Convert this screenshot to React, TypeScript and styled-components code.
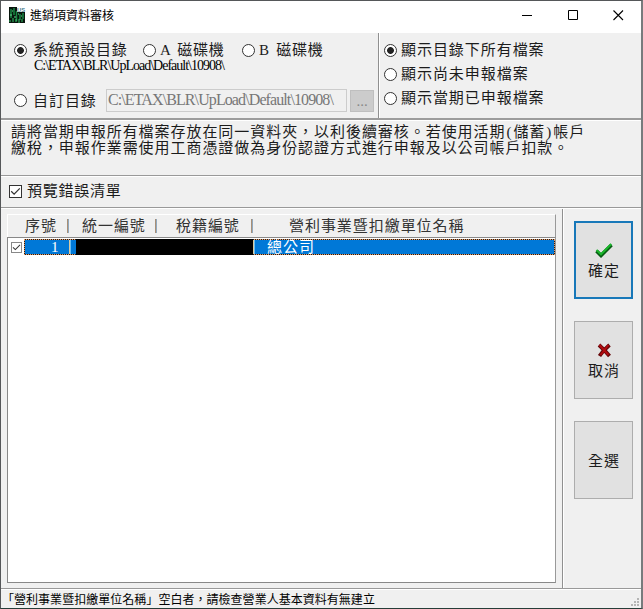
import React from 'react';
import styled, { createGlobalStyle, css } from 'styled-components';

const GlobalStyle = createGlobalStyle`
  * { box-sizing: border-box; }
  body { margin: 0; background: #f0f0f0; overflow: hidden; }
  button, input { font: inherit; color: inherit; }
`;

const Window = styled.div`
  width: 643px;
  height: 609px;
  display: flex;
  flex-direction: column;
  background: #f0f0f0;
  border: 1px solid #555759;
  border-right: 2px solid #777b7d;
  border-bottom-color: #263d38;
  color: #1c1c1c;
  font: 15px/16px "Liberation Serif", "Noto Sans CJK TC", serif;
  letter-spacing: 0.95px;
  white-space: pre;
`;

const TitleBar = styled.header`
  height: 32px;
  flex: none;
  display: flex;
  align-items: center;
  background: #fff;
  padding: 0 0 3px 8px;
`;

const Title = styled.h1`
  flex: 1;
  margin: 0 0 1px 4px;
  font: 12px/16px "Noto Sans CJK TC", sans-serif;
  letter-spacing: 0;
  color: #000;
`;

const CaptionButton = styled.button`
  width: 46px;
  height: 29px;
  padding: 0;
  border: 0;
  background: none;
  display: grid;
  place-items: center;
  &:last-child { width: 45px; }
`;

const Source = styled.section`
  height: 87px;
  flex: none;
  display: flex;
  border-bottom: 2px solid #9c9c9c;
`;

const Folders = styled.div`
  width: 378px;
  padding: 9px 0 0 13px;
  border-right: 1px solid #909090;
`;

const Filters = styled.div`
  flex: 1;
  border-left: 1px solid #fff;
  padding: 8px 0 0 4px;
  display: flex;
  flex-direction: column;
`;

const Choices = styled.div`
  display: flex;
  height: 16px;
  letter-spacing: 0.75px;
  word-spacing: 2px;
`;

const Choice = styled.label<{ $width?: number; $tall?: boolean; $gap?: number }>`
  display: flex;
  align-items: center;
  gap: ${p => p.$gap ?? 4}px;
  width: ${p => (p.$width ? `${p.$width}px` : 'auto')};
  height: ${p => (p.$tall ? 24 : 16)}px;
  flex: none;
  ${p => p.$tall && css`padding-bottom: 6px;`}
`;

const Dot = styled.input.attrs({ type: 'radio' })`
  appearance: none;
  flex: none;
  width: 13px;
  height: 13px;
  margin: 0;
  border: 1px solid #333;
  border-radius: 50%;
  background: #fff;
  &:checked { background: radial-gradient(circle, #222 0 3px, #fff 3.8px); }
`;

const Path = styled.div`
  height: 16px;
  margin: 0 0 0 20px;
  color: #000;
  font-size: 14px;
  line-height: 16px;
  letter-spacing: -1px;
`;

const CustomRow = styled.div`
  display: flex;
  margin-top: 15px;
  height: 23px;
  align-items: center;
`;

const PathField = styled.input`
  width: 241px;
  height: 23px;
  border: 1px solid #ccc;
  background: #f0f0f0;
  padding: 0 1px 1px;
  color: #777;
  font-size: 16px;
  letter-spacing: -0.9px;
`;

const Browse = styled.button`
  width: 24px;
  height: 22px;
  margin-left: 3px;
  padding: 0;
  border: 1px solid #bfbfbf;
  background: #ccc;
  color: #888;
`;

const Notice = styled.section`
  height: 56px;
  flex: none;
  padding: 3px 0 0 10px;
  border-top: 1px solid #fff;
  border-bottom: 1px solid #999;
`;

const Paren = styled.span`
  padding: 0 1px;
`;

const Preview = styled.section`
  height: 32px;
  flex: none;
  display: flex;
  padding: 6px 0 0 8px;
  border-top: 1px solid #fff;
  border-bottom: 1px solid #999;
  letter-spacing: 0.75px;
`;

const Box = styled.span<{ $light?: boolean }>`
  width: ${p => (p.$light ? 11 : 13)}px;
  height: ${p => (p.$light ? 11 : 13)}px;
  flex: none;
  display: grid;
  place-items: center;
  background: #fff;
  border: 1px solid ${p => (p.$light ? '#888' : '#333')};
`;

const Main = styled.main`
  flex: 1;
  display: flex;
  min-height: 0;
  border-top: 1px solid #fff;
  border-bottom: 1px solid #999;
`;

const ListPane = styled.div`
  width: 562px;
  padding: 5px 6px 5px;
  border-right: 1px solid #909090;
  display: flex;
  flex-direction: column;
`;

const ListHeader = styled.div`
  height: 23px;
  flex: none;
  display: flex;
  align-items: center;
  border: 1px solid #fff;
  border-right-color: #999;
  border-bottom: 0;
  color: #333;
`;

const Column = styled.span<{ $width: number; $indent: number }>`
  width: ${p => p.$width}px;
  padding-left: ${p => p.$indent}px;
  flex: none;
`;

const Divider = styled.span<{ $selected?: boolean }>`
  width: 2px;
  height: 14px;
  flex: none;
  border-left: 1px solid ${p => (p.$selected ? '#d8c9a0' : '#a98f76')};
  border-right: 1px solid ${p => (p.$selected ? '#66bdf5' : '#91a9bf')};
`;

const List = styled.div`
  flex: 1;
  background: #fff;
  border: 1px solid #888;
  border-right-color: #999;
  padding-top: 1px;
`;

const Row = styled.div`
  display: flex;
  align-items: center;
  height: 16px;
  padding-left: 3px;
`;

const Selected = styled.div`
  flex: 1;
  margin-left: 2px;
  height: 16px;
  display: flex;
  align-items: center;
  background: linear-gradient(#0078d7, #0078d7) padding-box, #1c1c20 border-box;
  border: 1px dotted #e59a62;
  color: #fff;
`;

const Redaction = styled.span`
  width: 177px;
  height: 16px;
  flex: none;
  background: #000;
`;

const Actions = styled.aside`
  flex: 1;
  padding: 12px 0 0 10px;
  border-left: 1px solid #fff;
  display: flex;
  flex-direction: column;
  gap: 22px;
`;

const Action = styled.button<{ $primary?: boolean }>`
  width: 59px;
  height: 78px;
  flex: none;
  display: flex;
  flex-direction: column;
  align-items: center;
  justify-content: center;
  gap: 5px;
  padding: 1px 0 0 1px;
  background: #e1e1e1;
  border: ${p => (p.$primary ? '2px solid #1878b9' : '1px solid #adadad')};
  letter-spacing: 0.95px;
  line-height: 16px;
`;

const StatusBar = styled.footer`
  height: 19px;
  flex: none;
  display: flex;
  justify-content: space-between;
  padding-left: 1px;
  border-top: 1px solid #fff;
  font: 12px/18px "Noto Sans CJK TC", sans-serif;
  letter-spacing: 0.03px;
  color: #000;
`;

const Grip = styled.svg`
  align-self: flex-end;
  margin: 0 1px 1px 0;
`;

function Tick({ size }: { size: number }) {
  return (
    <svg width={size} height={size} viewBox="0 0 11 11" fill="none" stroke="#333" strokeWidth="1.25">
      <path d="M1.2 5.3 4.1 8.1 9.8 2.4" />
    </svg>
  );
}

function AppIcon() {
  return (
    <svg width="17" height="17" viewBox="0 0 17 17">
      <path d="M0 0H8V5H16V16H0Z" fill="#08150d" />
      <path d="M2 2V11M5 1V8M7.5 4V14M11 7V13M14 6V12" stroke="#168641" strokeWidth="1.5" />
      <path d="M1 13V15M4 11V15M7 12V15M10 12V16M13 12V15" stroke="#34c56b" />
      <path d="M3 4H4M1 8H3M9 7H10M5 10H7M12 9H13" stroke="#65d58d" />
      <text x="8" y="5" fontFamily="Liberation Sans" fontSize="5.8" fontWeight="bold" letterSpacing="0" fill="#477e91">US</text>
    </svg>
  );
}

const filters = ['顯示目錄下所有檔案', '顯示尚未申報檔案', '顯示當期已申報檔案'];

export default function App() {
  return (
    <>
      <GlobalStyle />
      <Window>
        <TitleBar>
          <AppIcon />
          <Title>進銷項資料審核</Title>
          <CaptionButton aria-label="Minimize"><svg width="11" height="11"><path d="M0 5.5H10" stroke="#000" /></svg></CaptionButton>
          <CaptionButton aria-label="Maximize"><svg width="11" height="11"><path d="M.5.5H9.5V9.5H.5Z" fill="none" stroke="#000" /></svg></CaptionButton>
          <CaptionButton aria-label="Close"><svg width="11" height="11"><path d="M.5.5 10 10M10 .5.5 10" stroke="#000" strokeWidth="1.1" /></svg></CaptionButton>
        </TitleBar>
        <Source>
          <Folders>
            <Choices>
              <Choice $width={129} $gap={6}><Dot name="folder" defaultChecked />系統預設目錄</Choice>
              <Choice $width={99}><Dot name="folder" />A 磁碟機</Choice>
              <Choice><Dot name="folder" />B 磁碟機</Choice>
            </Choices>
            <Path>C:\ETAX\BLR\UpLoad\Default\10908\</Path>
            <CustomRow>
              <Choice $width={92} $gap={6}><Dot name="folder" />自訂目錄</Choice>
              <PathField disabled defaultValue="C:\ETAX\BLR\UpLoad\Default\10908\" />
              <Browse disabled>...</Browse>
            </CustomRow>
          </Folders>
          <Filters>
            {filters.map((name, i) => (
              <Choice key={name} $tall><Dot name="filter" defaultChecked={i === 0} />{name}</Choice>
            ))}
          </Filters>
        </Source>
        <Notice>
          <div>請將當期申報所有檔案存放在同一資料夾，以利後續審核。若使用活期<Paren>(</Paren>儲蓄<Paren>)</Paren>帳戶</div>
          <div>繳稅，申報作業需使用工商憑證做為身份認證方式進行申報及以公司帳戶扣款。</div>
        </Notice>
        <Preview>
          <Choice $gap={5}><Box><Tick size={11} /></Box>預覽錯誤清單</Choice>
        </Preview>
        <Main>
          <ListPane>
            <ListHeader>
              <Column $width={59} $indent={17}>序號</Column><Divider />
              <Column $width={86} $indent={13}>統一編號</Column><Divider />
              <Column $width={94} $indent={19}>稅籍編號</Column><Divider />
              <Column $width={250} $indent={36}>營利事業暨扣繳單位名稱</Column>
            </ListHeader>
            <List>
              <Row>
                <Box $light><Tick size={9} /></Box>
                <Selected>
                  <Column $width={44} $indent={26}>1</Column><Divider $selected />
                  <Column $width={5} $indent={0} />
                  <Redaction /><Divider $selected />
                  <Column $width={200} $indent={12}>總公司</Column>
                </Selected>
              </Row>
            </List>
          </ListPane>
          <Actions>
            <Action $primary>
              <svg width="18" height="16" viewBox="0 0 18 16">
                <path d="M1.5 9 6 13.5 16.5 3" fill="none" stroke="#075b12" strokeWidth="3.6" />
                <path d="M1.5 8 6 12.3 16.3 2" fill="none" stroke="#19b52b" strokeWidth="2" />
              </svg>
              確定
            </Action>
            <Action>
              <svg width="15" height="15" viewBox="0 0 14 15">
                <path d="M1.5 2Q7 7 12 13M12 2Q6 7 2 13" fill="none" stroke="#650608" strokeWidth="3.8" />
                <path d="M2 2 11 12M11 2 3 12" fill="none" stroke="#b10b10" strokeWidth="2" />
              </svg>
              取消
            </Action>
            <Action>全選</Action>
          </Actions>
        </Main>
        <StatusBar>
          <span>「營利事業暨扣繳單位名稱」空白者，請檢查營業人基本資料有無建立</span>
          <Grip width="9" height="9" fill="#b5b5b5">
            <path d="M6 0H8V2H6ZM3 3H5V5H3ZM6 3H8V5H6ZM0 6H2V8H0ZM3 6H5V8H3ZM6 6H8V8H6Z" />
          </Grip>
        </StatusBar>
      </Window>
    </>
  );
}
